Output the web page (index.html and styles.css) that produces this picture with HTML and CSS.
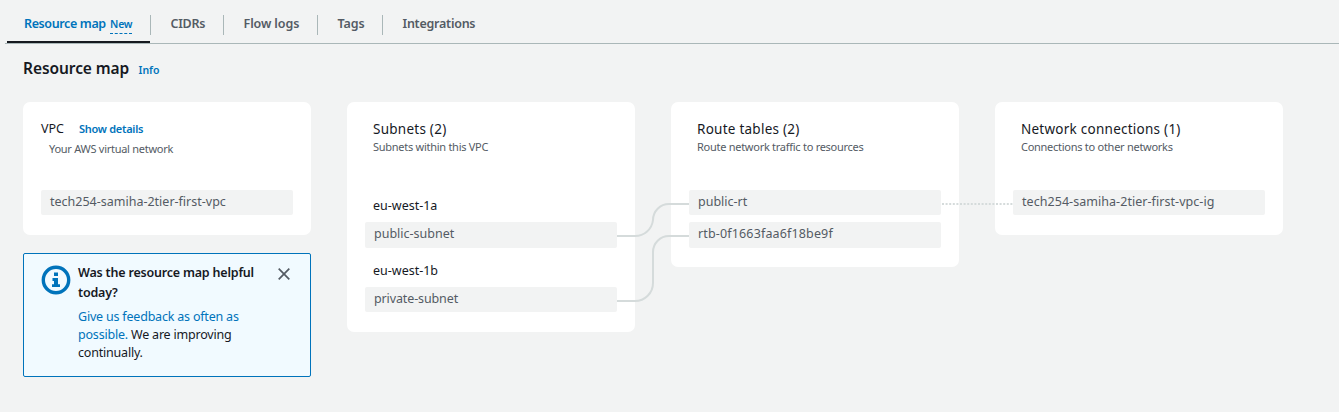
FILE: index.html
```html
<!DOCTYPE html>
<html lang="en">
<head>
<meta charset="utf-8">
<title>Resource map</title>
<link rel="stylesheet" href="styles.css">
</head>
<body>
<nav class="tabs">
  <a class="tab tab-active"><span class="tab-text">Resource map</span><span class="new">New</span></a>
  <a class="tab tab-cidrs">CIDRs</a>
  <a class="tab tab-flow">Flow logs</a>
  <a class="tab tab-tags">Tags</a>
  <a class="tab tab-int">Integrations</a>
</nav>
<header class="heading"><h1>Resource map</h1><a class="info">Info</a></header>
<main class="map">
  <div class="column">
    <section class="card">
      <div class="card-head vpc-head">
        <div class="vpc-row"><h2 class="vpc-title">VPC</h2><a class="details">Show details</a></div>
        <p class="desc vpc-desc">Your AWS virtual network</p>
      </div>
      <div class="item"><span>tech254-samiha-2tier-first-vpc</span></div>
    </section>
    <aside class="alert">
      <svg class="alert-icon" viewBox="0 0 30 30" width="30" height="30">
        <circle cx="15" cy="15" r="12.7" fill="none" stroke="#0073bb" stroke-width="3.4"/>
        <path d="M13 7.5h4v3.5h-4zM11.5 13h5.5v6.2h2V22h-8v-2.8h2V16h-1.5z" fill="#0073bb"/>
      </svg>
      <div class="alert-body">
        <h3>Was the resource map helpful<br>today?</h3>
        <p><a>Give us feedback as often as<br>possible.</a> We are improving<br>continually.</p>
      </div>
      <svg class="close" viewBox="0 0 12 12" width="12" height="12"><path d="M.7.7l10.6 10.6M11.3.7L.7 11.3" stroke="#545b64" stroke-width="1.7" fill="none"/></svg>
    </aside>
  </div>
  <section class="card">
    <div class="card-head"><h2>Subnets (2)</h2><p class="desc">Subnets within this VPC</p></div>
    <h4 class="zone">eu-west-1a</h4>
    <div class="item item-tall"><span>public-subnet</span></div>
    <h4 class="zone zone-next">eu-west-1b</h4>
    <div class="item"><span class="private">private-subnet</span></div>
  </section>
  <section class="card">
    <div class="card-head"><h2>Route tables (2)</h2><p class="desc">Route network traffic to resources</p></div>
    <div class="item"><span>public-rt</span></div>
    <div class="item item-tall item-next"><span class="rtb">rtb-0f1663faa6f18be9f</span></div>
  </section>
  <section class="card">
    <div class="card-head"><h2>Network connections (1)</h2><p class="desc">Connections to other networks</p></div>
    <div class="item"><span class="gateway">tech254-samiha-2tier-first-vpc-ig</span></div>
  </section>
  <svg class="links" viewBox="0 0 1339 412" width="1339" height="412" fill="none">
    <g stroke="#d5dbdb" stroke-width="2">
      <path d="M617 236H635A18 18 0 0 0 653 220A16 16 0 0 1 669 204H689"/>
      <path d="M617 301H635A18 18 0 0 0 653 283V252A16 16 0 0 1 669 236H689"/>
    </g>
    <path d="M942 204H1013" stroke="#d5dbdb" stroke-width="2" stroke-dasharray="2 1.6"/>
  </svg>
</main>
</body>
</html>
```
FILE: styles.css
```css
* { box-sizing: border-box; margin: 0; padding: 0; }
body {
  width: 1339px; height: 412px; overflow: hidden; position: relative;
  background: #f2f3f3; color: #16191f;
  font-family: "Noto Sans", "Open Sans", sans-serif;
  font-size: 12.5px; line-height: 20px;
}
h1, h2, h3, h4 { font-weight: 400; }
.tabs {
  display: flex; height: 44px; margin-left: 5px; padding: 15px 0 0 2px;
  border-bottom: 1px solid #aab7b8;
}
.tab {
  height: 20px; line-height: 18px; padding: 0 0 0 19.5px; flex: none;
  font-size: 12.5px; font-weight: 600; letter-spacing: -.25px; color: #545b64; white-space: nowrap;
  border-right: 1px solid #aab7b8;
}
.tab-active {
  display: flex; position: relative; width: 144px; padding-left: 17px; color: #0073bb;
}
.tab-active::after {
  content: ""; position: absolute; left: 0; right: 0; top: 26px; height: 2px; background: #16191f;
}
.tab-text { width: 86px; letter-spacing: -.38px; }
.new { height: 19px; font-size: 10.5px; letter-spacing: -.2px; border-bottom: 1px dashed #0073bb; }
.tab-cidrs { width: 73px; }
.tab-flow { width: 94px; letter-spacing: -.1px; }
.tab-tags { width: 65px; letter-spacing: -.1px; }
.tab-int { border: 0; }
.heading { display: flex; align-items: baseline; padding: 13px 0 0 23px; height: 58px; line-height: 22px; }
.heading h1 { width: 115.5px; font-size: 15.5px; font-weight: 600; letter-spacing: -.07px; white-space: nowrap; }
.info { font-size: 10.5px; font-weight: 600; color: #0073bb; }
.map { display: flex; align-items: flex-start; gap: 36px; padding-left: 23px; }
.column { display: flex; flex-direction: column; gap: 18px; width: 288px; }
.card { width: 288px; padding: 18px 18px 20px; background: #fff; border-radius: 7px; }
.card-head { height: 70px; padding-left: 8px; white-space: nowrap; }
.card-head h2 { font-size: 13.5px; line-height: 18px; letter-spacing: .25px; color: #16191f; }
.desc { font-size: 11px; line-height: 18px; letter-spacing: -.27px; color: #545b64; }
.card-head.vpc-head { padding-left: 0; }
.vpc-row { display: flex; align-items: baseline; height: 20px; }
.card-head .vpc-title { width: 38px; font-size: 12.5px; letter-spacing: 0; }
.details { font-size: 11px; line-height: 18px; font-weight: 600; letter-spacing: -.28px; color: #0073bb; }
.vpc-desc { padding-left: 8px; }
.item {
  height: 25px; padding-left: 9px; line-height: 23px; background: #f2f3f3;
  border-radius: 2px; color: #545b64; white-space: nowrap;
}
.item-tall { height: 26px; }
.item-next { margin: 7px 0 -1px; }
.private { letter-spacing: -.12px; }
.rtb { letter-spacing: .15px; }
.gateway { letter-spacing: .05px; }
.zone { height: 32px; padding: 6px 0 0 8px; font-size: 12.5px; line-height: 20px; }
.zone-next { height: 39px; padding-top: 13px; }
.alert {
  display: flex; height: 124px; padding: 9px 20px 0 17px; background: #f1faff;
  border: 1px solid #0073bb; border-radius: 2px;
}
.alert-icon { margin: 2px 7px 0 0; flex: none; }
.alert-body { width: 200px; white-space: nowrap; flex: none; }
.alert h3 { font-size: 12.5px; font-weight: 600; letter-spacing: -.2px; }
.alert p { margin-top: 5px; line-height: 18px; letter-spacing: -.2px; }
.alert a { color: #0073bb; }
.close { margin-top: 5px; flex: none; }
.links { position: absolute; left: 0; top: 0; pointer-events: none; }
```
